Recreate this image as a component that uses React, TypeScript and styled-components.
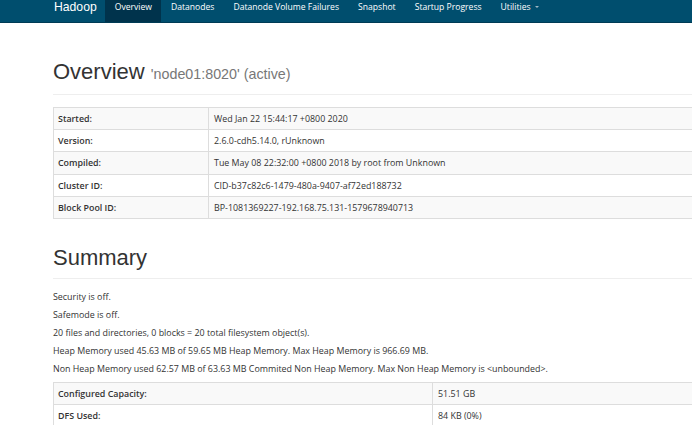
import React from 'react'
import styled, { createGlobalStyle } from 'styled-components'

const GlobalStyle = createGlobalStyle`
  html, body {
    margin: 0;
    padding: 0;
    background: #fff;
    overflow: hidden;
  }
  body {
    font-family: "Open Sans", "Noto Sans", sans-serif;
    font-size: 8.9px;
    color: #333;
  }
`

const NavBar = styled.nav`
  display: flex;
  align-items: stretch;
  height: 22px;
  background: #004e6e;
  border-bottom: 1px solid #003b55;
  padding-left: 54px;
`

const Brand = styled.span`
  font-family: "Liberation Sans", Arial, sans-serif;
  font-size: 12.2px;
  color: #fff;
  line-height: 15px;
  margin-right: 8.5px;
`

const NavLink = styled.a<{ active?: boolean }>`
  display: flex;
  align-items: flex-start;
  gap: 4px;
  padding: 0 9.5px;
  line-height: 14px;
  font-size: 8.6px;
  color: #fff;
  text-decoration: none;
  background: ${(p) => (p.active ? '#00334c' : 'transparent')};
`

const Caret = styled.span`
  display: inline-block;
  margin-top: 6px;
  border-left: 2.5px solid transparent;
  border-right: 2.5px solid transparent;
  border-top: 2.5px solid #9fb7c4;
`

const Container = styled.main`
  width: 684px;
  margin-left: 53px;
`

const PageHeader = styled.div<{ top: number }>`
  margin-top: ${(p) => p.top}px;
  padding-bottom: 7px;
  border-bottom: 1px solid #eee;
`

const Title = styled.h1`
  margin: 0;
  font-family: "Liberation Sans", Arial, sans-serif;
  font-weight: 400;
  font-size: 22px;
  line-height: 26px;
  color: #333;
`

const Sub = styled.small`
  font-size: 14.3px;
  color: #777;
`

const Table = styled.table<{ top: number }>`
  width: 100%;
  border-collapse: collapse;
  margin-top: ${(p) => p.top}px;
  table-layout: fixed;
`

const Row = styled.tr`
  &:nth-child(odd) {
    background: #f9f9f9;
  }
`

const Key = styled.th<{ width: number }>`
  width: ${(p) => p.width}px;
  text-align: left;
  font-weight: 600;
  border: 1px solid #ddd;
  height: 22.2px;
  padding: 0 4px;
  box-sizing: border-box;
`

const Val = styled.td`
  border: 1px solid #ddd;
  padding: 0 5px;
  height: 22.2px;
  box-sizing: border-box;
`

const Lines = styled.div`
  margin-top: 9px;
`

const Line = styled.p`
  margin: 0;
  line-height: 18px;
`

const info: [string, string][] = [
  ['Started:', 'Wed Jan 22 15:44:17 +0800 2020'],
  ['Version:', '2.6.0-cdh5.14.0, rUnknown'],
  ['Compiled:', 'Tue May 08 22:32:00 +0800 2018 by root from Unknown'],
  ['Cluster ID:', 'CID-b37c82c6-1479-480a-9407-af72ed188732'],
  ['Block Pool ID:', 'BP-1081369227-192.168.75.131-1579678940713'],
]

const summary = [
  'Security is off.',
  'Safemode is off.',
  '20 files and directories, 0 blocks = 20 total filesystem object(s).',
  'Heap Memory used 45.63 MB of 59.65 MB Heap Memory. Max Heap Memory is 966.69 MB.',
  'Non Heap Memory used 62.57 MB of 63.63 MB Commited Non Heap Memory. Max Non Heap Memory is <unbounded>.',
]

const capacity: [string, string][] = [
  ['Configured Capacity:', '51.51 GB'],
  ['DFS Used:', '84 KB (0%)'],
]

const links = ['Overview', 'Datanodes', 'Datanode Volume Failures', 'Snapshot', 'Startup Progress']

export default function App() {
  return (
    <>
      <GlobalStyle />
      <NavBar>
        <Brand>Hadoop</Brand>
        {links.map((l, i) => (
          <NavLink key={l} active={i === 0}>
            {l}
          </NavLink>
        ))}
        <NavLink>
          Utilities <Caret />
        </NavLink>
      </NavBar>
      <Container>
        <PageHeader top={36}>
          <Title>
            Overview <Sub>'node01:8020' (active)</Sub>
          </Title>
        </PageHeader>
        <Table top={12}>
          <tbody>
            {info.map(([k, v]) => (
              <Row key={k}>
                <Key width={155}>{k}</Key>
                <Val>{v}</Val>
              </Row>
            ))}
          </tbody>
        </Table>
        <PageHeader top={26}>
          <Title>Summary</Title>
        </PageHeader>
        <Lines>
          {summary.map((s) => (
            <Line key={s}>{s}</Line>
          ))}
        </Lines>
        <Table top={4}>
          <tbody>
            {capacity.map(([k, v]) => (
              <Row key={k}>
                <Key width={379}>{k}</Key>
                <Val>{v}</Val>
              </Row>
            ))}
          </tbody>
        </Table>
      </Container>
    </>
  )
}
